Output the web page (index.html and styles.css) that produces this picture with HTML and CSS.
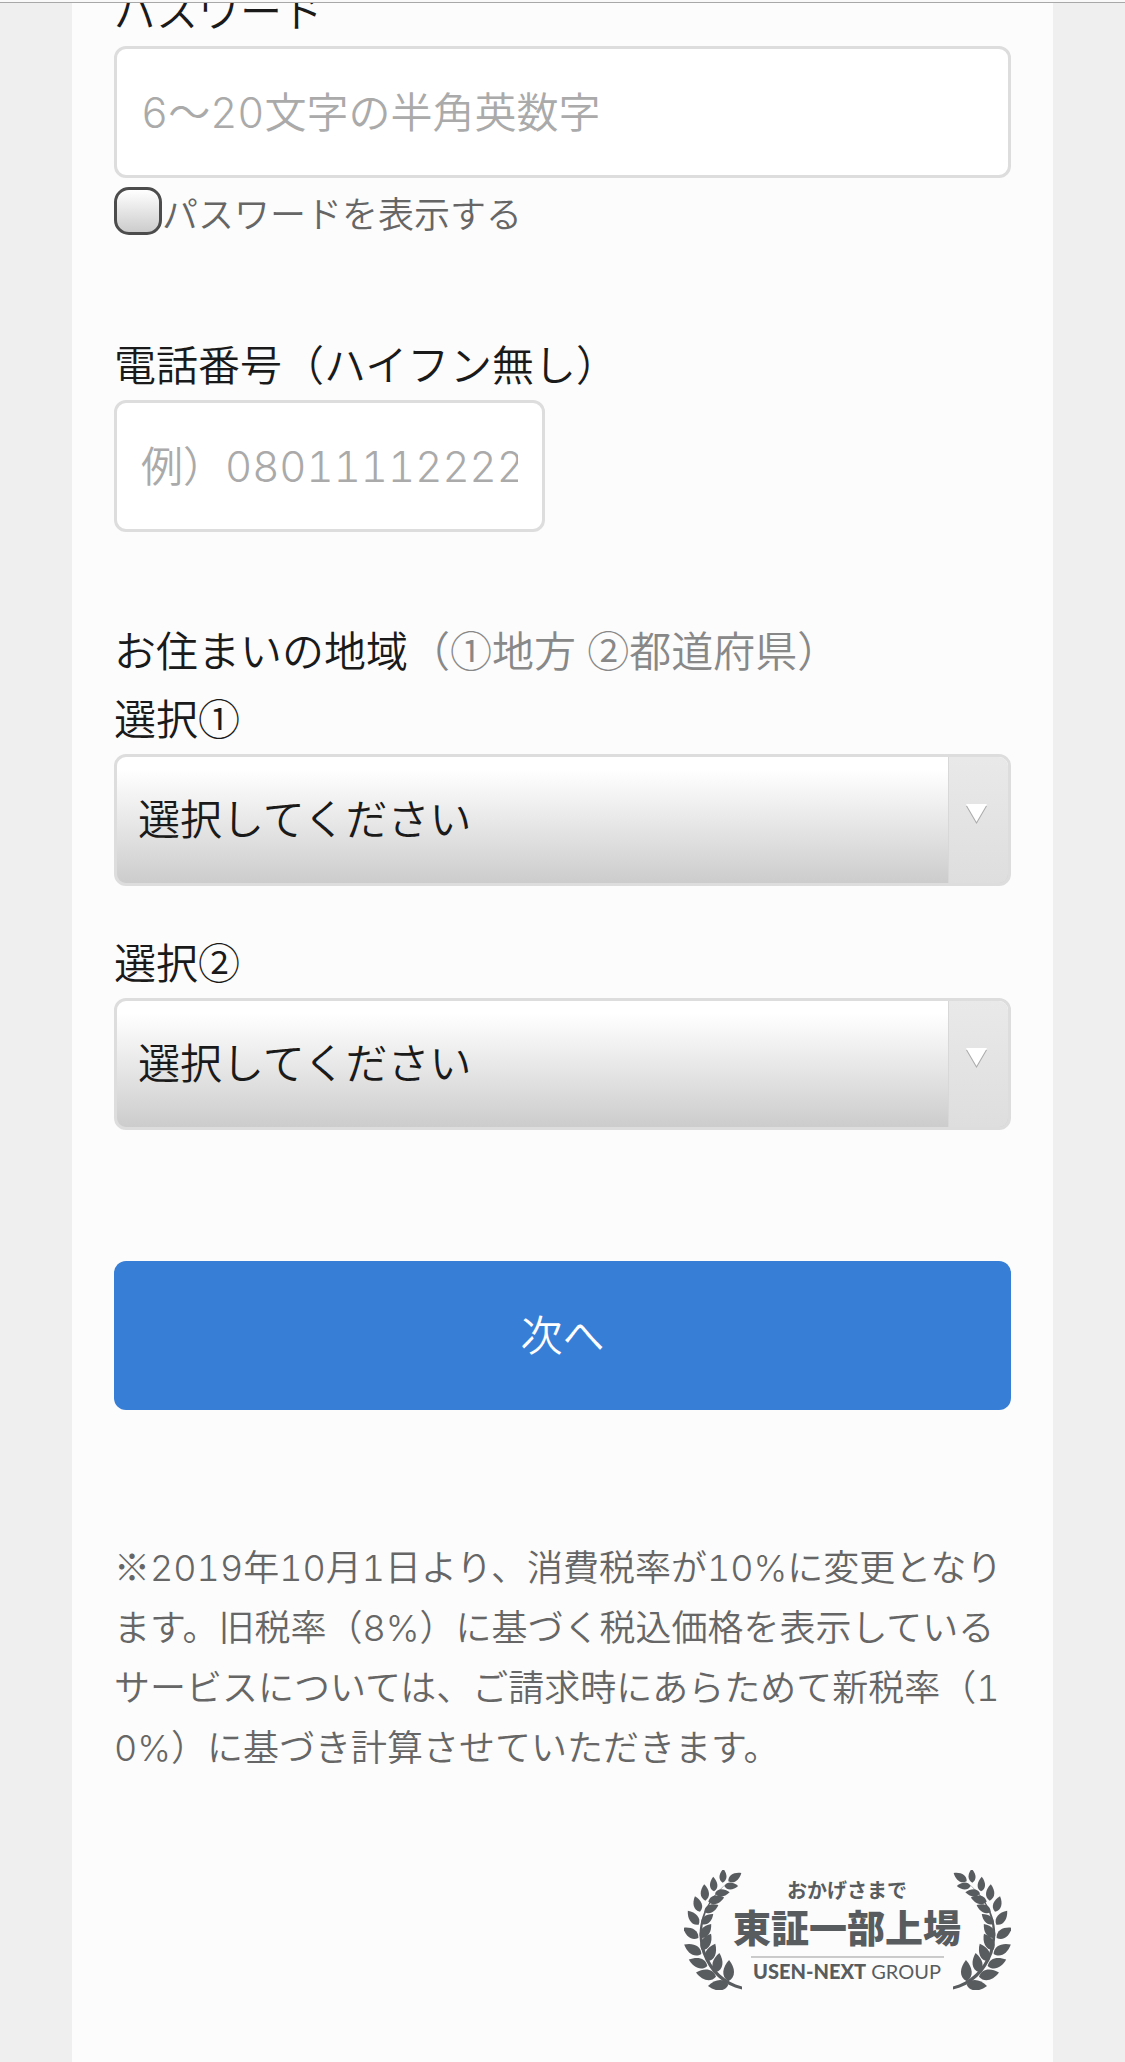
FILE: index.html
```html
<!DOCTYPE html>
<html lang="ja">
<head>
  <meta charset="UTF-8">
  <meta name="viewport" content="width=device-width, initial-scale=1.0">
  <title>会員登録</title>
  <link rel="stylesheet" href="styles.css">
</head>
<body>
<div class="top-line"></div>
<main class="container">
  <form class="signup">
    <div class="field">
      <label for="password">パスワード</label>
      <input type="password" id="password" placeholder="6〜20文字の半角英数字">
      <div class="check-row">
        <input type="checkbox" id="showPassword">
        <label for="showPassword">パスワードを表示する</label>
      </div>
    </div>

    <div class="field">
      <label for="tel">電話番号（ハイフン無し）</label>
      <input type="tel" id="tel" class="short" placeholder="例）08011112222">
    </div>

    <div class="field">
      <p class="field-title">お住まいの地域<span class="hint">（<span class="mark">①</span>地方 <span class="mark">②</span>都道府県）</span></p>
      <label for="area">選択<span class="mark">①</span></label>
      <div class="select-box">
        <select id="area"><option>選択してください</option></select>
        <span class="arrow"><svg width="21" height="20" viewBox="0 0 21 20"><path d="M0 2h21L10.500 20z" fill="#aaa"/><path d="M0 0h21L10.500 18z" fill="#fff"/></svg></span>
      </div>
      <label for="pref">選択<span class="mark">②</span></label>
      <div class="select-box">
        <select id="pref"><option>選択してください</option></select>
        <span class="arrow"><svg width="21" height="20" viewBox="0 0 21 20"><path d="M0 2h21L10.500 20z" fill="#aaa"/><path d="M0 0h21L10.500 18z" fill="#fff"/></svg></span>
      </div>
    </div>

    <button type="submit">次へ</button>
  </form>

  <p class="note"><span class="mark">※</span>2019年10月1日より、消費税率が10%に変更となります。旧税率（8%）に基づく税込価格を表示しているサービスについては、ご請求時にあらためて新税率（10%）に基づき計算させていただきます。</p>

  <div class="badge">
    <svg width="327" height="120" viewBox="0 0 327 120" role="img" aria-label="おかげさまで 東証一部上場 USEN-NEXT GROUP">
      <defs>
        <path id="leaf" d="M0 0C-18-10-15-32 0-49C15-32 18-10 0 0z"/>
        <g id="laurel">
          <path d="M58 116.500C41 112 28 100 21.500 82C14 58 19 35 43 13C18 34 11 58 18.500 83C26 103 39 115 58 119.500z"/>
          <g transform="translate(-4 -6) scale(.3333)">
            <use href="#leaf" transform="translate(128 56) rotate(3) scale(.85)"/>
            <use href="#leaf" transform="translate(145 52) rotate(57) scale(.95)"/>
            <use href="#leaf" transform="translate(102 82) rotate(-3) scale(.9)"/>
            <use href="#leaf" transform="translate(133 66) rotate(90) scale(.85)"/>
            <use href="#leaf" transform="translate(76 110) rotate(-4)"/>
            <use href="#leaf" transform="translate(105 88) rotate(86) scale(.9)"/>
            <use href="#leaf" transform="translate(60 143) rotate(-18)"/>
            <use href="#leaf" transform="translate(85 113) rotate(75)"/>
            <use href="#leaf" transform="translate(56 182) rotate(-38) scale(1.08)"/>
            <use href="#leaf" transform="translate(73 143) rotate(65) scale(.95)"/>
            <use href="#leaf" transform="translate(55 222) rotate(-56) scale(1.12)"/>
            <use href="#leaf" transform="translate(64 180) rotate(50) scale(.95)"/>
            <use href="#leaf" transform="translate(64 270) rotate(-61) scale(1.2)"/>
            <use href="#leaf" transform="translate(61 222) rotate(38) scale(1.08)"/>
            <use href="#leaf" transform="translate(82 306) rotate(-71) scale(1.2)"/>
            <use href="#leaf" transform="translate(65 258) rotate(30) scale(1.15)"/>
            <use href="#leaf" transform="translate(108 338) rotate(-78) scale(1.25)"/>
            <use href="#leaf" transform="translate(80 292) rotate(26) scale(1.2)"/>
            <use href="#leaf" transform="translate(145 362) rotate(-94) scale(1.25)"/>
            <use href="#leaf" transform="translate(108 325) rotate(10) scale(1.2)"/>
            <use href="#leaf" transform="translate(145 352) rotate(2) scale(1.3)"/>
          </g>
        </g>
      </defs>
      <use href="#laurel"/>
      <use href="#laurel" transform="translate(327 0) scale(-1 1)"/>
      <text class="badge-small" x="163" y="28">おかげさまで</text>
      <text class="badge-big" x="163" y="72">東証一部上場</text>
      <path d="M67 87h193" stroke="#999"/>
      <text class="badge-group" x="163" y="109"><tspan class="strong">USEN-NEXT</tspan> GROUP</text>
    </svg>
  </div>
</main>
</body>
</html>
```
FILE: styles.css
```css
* {
  box-sizing: border-box;
}
body {
  margin: 0;
  background-color: #efefef;
  color: #1a1a1a;
  font-family: Inter, "Noto Sans CJK JP", sans-serif;
  font-size: 42px;
  font-weight: 350;
  font-variant-numeric: tabular-nums;
  line-height: 68px;
  overflow-x: hidden;
}
.top-line {
  position: fixed;
  top: 0;
  left: 0;
  right: 0;
  height: 3px;
  background-color: #f9f9f9;
  border-bottom: 1px solid #a8a8a8;
  z-index: 1;
}
.container {
  margin: -22px 72px 0;
  padding: 0 42px 73px;
  background-color: #fcfcfc;
}
.field {
  margin-bottom: 86px;
}
.field label {
  display: block;
}
.field-title {
  margin: 0;
}
.hint {
  color: #888;
}
.mark {
  font-family: "Noto Sans CJK JP", sans-serif;
  line-height: 1;
}
input,
select,
button {
  font: inherit;
  color: inherit;
}
input[type="password"],
input[type="tel"] {
  display: block;
  width: 100%;
  height: 132px;
  padding: 0 24px;
  border: 3px solid #ddd;
  border-radius: 12px;
  background-color: #fff;
}
input.short {
  width: 48%;
}
input::placeholder {
  color: #aaa;
}
.check-row {
  display: flex;
  padding: 9px 0 3px;
  color: #666;
  font-size: 36px;
  line-height: 56px;
}
.check-row input {
  appearance: none;
  width: 48px;
  height: 48px;
  margin: 0;
  border: 3px solid #4c4c4c;
  border-radius: 15px;
  background: linear-gradient(#fff, #ccc);
}
.select-box {
  position: relative;
  margin-bottom: 44px;
}
select {
  display: block;
  appearance: none;
  width: 100%;
  height: 132px;
  padding: 0 84px 0 21px;
  border: 3px solid #ddd;
  border-radius: 12px;
  background: linear-gradient(#fff 10%, #ccc);
}
.arrow {
  position: absolute;
  top: 3px;
  right: 3px;
  bottom: 3px;
  display: flex;
  align-items: center;
  justify-content: center;
  width: 60px;
  padding: 0 4px 12px 0;
  border-left: 1px solid #d8d8d8;
  border-radius: 0 9px 9px 0;
  background: linear-gradient(#e9e9e9, #dedede);
  pointer-events: none;
}
button {
  display: block;
  width: 100%;
  height: 149px;
  margin-top: 131px;
  border: none;
  border-radius: 12px;
  background-color: #377ed6;
  color: #fff;
}
.note {
  margin: 128px 0 92px;
  color: #666;
  font-size: 36px;
  line-height: 60px;
  word-break: break-all;
}
.badge {
  display: flex;
  justify-content: flex-end;
}
.badge svg {
  fill: #595c5f;
}
.badge text {
  text-anchor: middle;
  font-family: "Noto Sans CJK JP", sans-serif;
}
.badge .badge-small {
  font-size: 20px;
  font-weight: 700;
}
.badge .badge-big {
  font-size: 38px;
  font-weight: 900;
}
.badge .badge-group {
  font-family: Lato, sans-serif;
  font-size: 20px;
  font-weight: 400;
}
.badge .strong {
  font-weight: 900;
}
```
